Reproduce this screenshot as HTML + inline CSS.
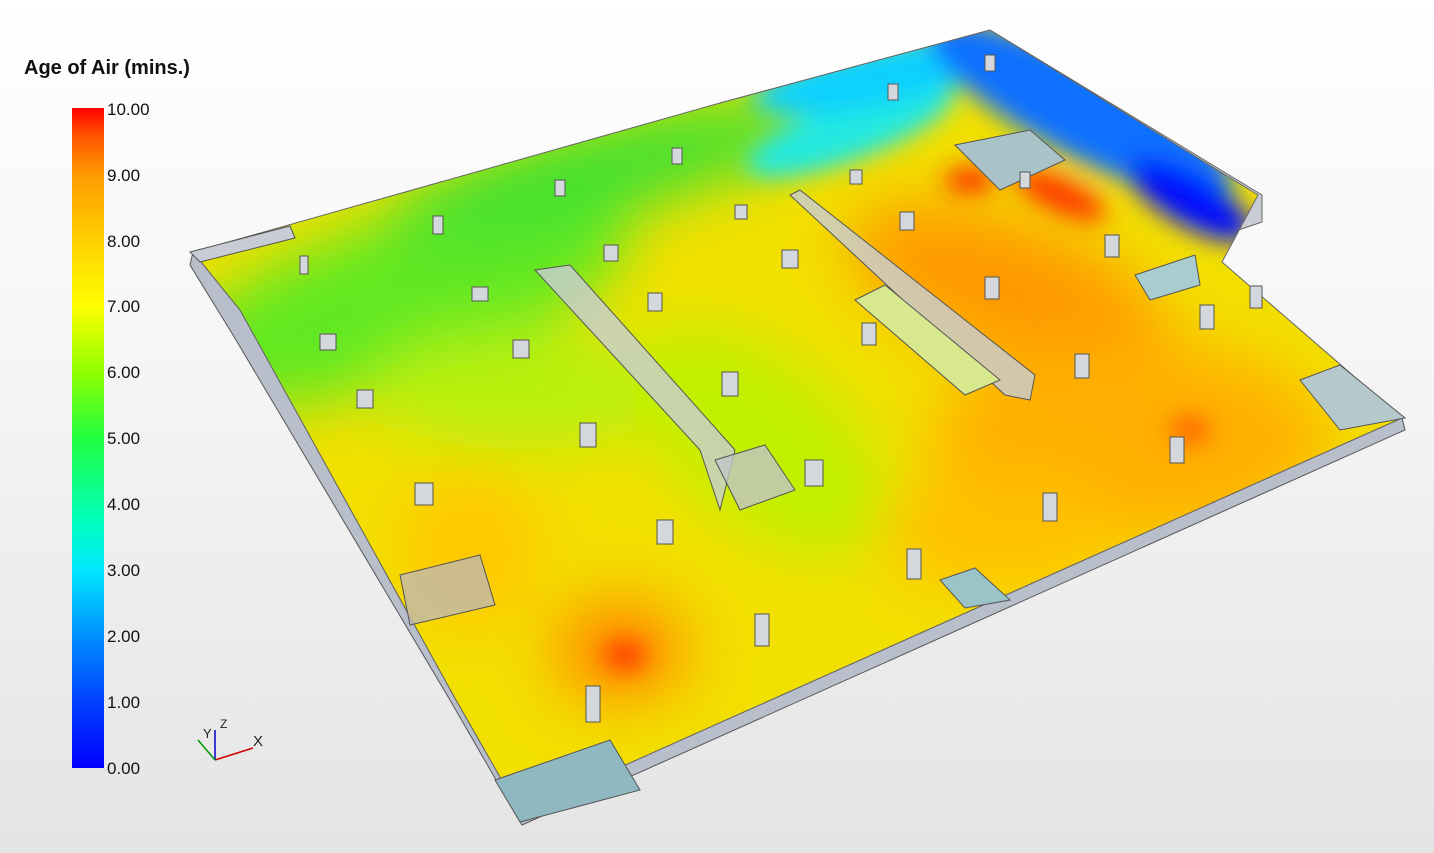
<!DOCTYPE html>
<html><head><style>
html,body{margin:0;padding:0;}
body{width:1434px;height:853px;overflow:hidden;background:linear-gradient(#ffffff,#f6f6f6 40%,#e4e4e4);font-family:"Liberation Sans",sans-serif;position:relative;}
.t{position:absolute;left:24px;top:57px;font-size:20px;font-weight:bold;color:#111;}
.bar{position:absolute;left:72px;top:108px;width:32px;height:660px;background:linear-gradient(to top,#0000ff 0%,#0040ff 10%,#0090ff 20%,#00e8ff 30%,#00ffc0 37%,#20ff40 50%,#90ff00 60%,#ffff00 70%,#ffd000 80%,#ff9a00 90%,#ff5000 96%,#ff0000 100%);}
.l{position:absolute;left:107px;font-size:17px;color:#111;}
</style></head><body>
<div class="t">Age of Air (mins.)</div>
<div class="bar"></div>
<div class="l" style="top:100px">10.00</div>
<div class="l" style="top:166px">9.00</div>
<div class="l" style="top:232px">8.00</div>
<div class="l" style="top:297px">7.00</div>
<div class="l" style="top:363px">6.00</div>
<div class="l" style="top:429px">5.00</div>
<div class="l" style="top:495px">4.00</div>
<div class="l" style="top:561px">3.00</div>
<div class="l" style="top:627px">2.00</div>
<div class="l" style="top:693px">1.00</div>
<div class="l" style="top:759px">0.00</div>
<svg width="1434" height="853" style="position:absolute;left:0;top:0">
<defs>
<clipPath id="fc"><polygon points="193,252 720,103 990,30 1258,195 1222,262 1402,418 520,812 456,700 240,310"/></clipPath>
<filter id="bl" x="-50%" y="-50%" width="200%" height="200%"><feGaussianBlur stdDeviation="30"/></filter>
<filter id="bl2" x="-50%" y="-50%" width="200%" height="200%"><feGaussianBlur stdDeviation="12"/></filter>
</defs>
<polygon points="193,252 240,310 456,700 520,812 1402,418 1405,430 522,825 450,700 233,335 190,265" fill="#b9bfca" stroke="#555" stroke-width="1"/>
<polygon points="720,103 990,30 1262,195 1262,222 1180,250 720,115" fill="#c9ccd4" stroke="#666" stroke-width="1"/>
<g clip-path="url(#fc)">
<rect x="150" y="0" width="1300" height="853" fill="#f2e000"/>
<g filter="url(#bl)">
<ellipse cx="400" cy="300" rx="240" ry="80" transform="rotate(-18 400 300)" fill="#60e820"/>
<ellipse cx="600" cy="170" rx="220" ry="45" transform="rotate(-14 600 170)" fill="#40e030"/>
<ellipse cx="520" cy="390" rx="150" ry="60" fill="#b8f010"/>
<ellipse cx="760" cy="440" rx="150" ry="80" transform="rotate(40 760 440)" fill="#c0f000"/>
<ellipse cx="1010" cy="290" rx="170" ry="70" transform="rotate(20 1010 290)" fill="#ff9a00"/>
<ellipse cx="1130" cy="440" rx="200" ry="100" fill="#ffb000"/>
<ellipse cx="1000" cy="530" rx="120" ry="60" fill="#ffc000"/>
<ellipse cx="620" cy="650" rx="70" ry="55" fill="#ff9500"/>
<ellipse cx="470" cy="550" rx="70" ry="80" fill="#ffc800"/>
</g>
<g filter="url(#bl2)">
<ellipse cx="850" cy="130" rx="110" ry="30" transform="rotate(-20 850 130)" fill="#20e8e0"/>
<ellipse cx="880" cy="75" rx="130" ry="30" transform="rotate(-12 880 75)" fill="#10d0ff"/>
<ellipse cx="1080" cy="110" rx="170" ry="45" transform="rotate(28 1080 110)" fill="#1070ff"/>
<ellipse cx="1190" cy="200" rx="70" ry="25" transform="rotate(30 1190 200)" fill="#0010ff"/>
<ellipse cx="1060" cy="195" rx="50" ry="16" transform="rotate(25 1060 195)" fill="#ff3000"/>
<ellipse cx="970" cy="180" rx="25" ry="12" fill="#ff2000"/>
<ellipse cx="625" cy="655" rx="22" ry="16" fill="#ff4000"/>
<ellipse cx="1190" cy="430" rx="20" ry="14" fill="#ff6000"/>
</g>
</g>
<polygon points="193,252 720,103 990,30 1258,195 1222,262 1402,418 520,812 456,700 240,310" fill="none" stroke="#666" stroke-width="1"/>
<polygon points="190,252 290,226 295,238 200,262" fill="#c8ccd4" stroke="#555"/>
<polygon points="535,270 570,265 735,450 720,510 700,450" fill="#c8cdd4" fill-opacity="0.8" stroke="#555"/>
<polygon points="790,195 800,190 1035,375 1030,400 1005,395" fill="#c8cdd4" fill-opacity="0.8" stroke="#555"/>
<polygon points="855,300 885,285 1000,380 965,395" fill="#d8e88c" stroke="#555"/>
<polygon points="955,145 1030,130 1065,160 1000,190" fill="#a9c3c8" stroke="#555"/>
<polygon points="715,460 765,445 795,490 740,510" fill="#c0c4c8" fill-opacity="0.8" stroke="#555"/>
<polygon points="400,575 480,555 495,605 410,625" fill="#c0b8b0" fill-opacity="0.8" stroke="#555"/>
<polygon points="940,580 975,568 1010,600 965,608" fill="#9bc4c8" stroke="#555"/>
<polygon points="1135,275 1195,255 1200,285 1150,300" fill="#a9cccf" stroke="#555"/>
<polygon points="1300,380 1340,365 1405,418 1340,430" fill="#b5c8cc" stroke="#555"/>
<polygon points="495,780 610,740 640,790 520,822" fill="#90b8c0" stroke="#555"/>
<g fill="#d4d8dc" stroke="#555" stroke-width="1">
<rect x="300" y="256" width="8" height="18"/><rect x="320" y="334" width="16" height="16"/><rect x="357" y="390" width="16" height="18"/>
<rect x="472" y="287" width="16" height="14"/><rect x="513" y="340" width="16" height="18"/><rect x="415" y="483" width="18" height="22"/>
<rect x="580" y="423" width="16" height="24"/><rect x="657" y="520" width="16" height="24"/><rect x="722" y="372" width="16" height="24"/>
<rect x="648" y="293" width="14" height="18"/><rect x="604" y="245" width="14" height="16"/><rect x="782" y="250" width="16" height="18"/>
<rect x="805" y="460" width="18" height="26"/><rect x="862" y="323" width="14" height="22"/><rect x="900" y="212" width="14" height="18"/>
<rect x="985" y="277" width="14" height="22"/><rect x="1075" y="354" width="14" height="24"/><rect x="1105" y="235" width="14" height="22"/>
<rect x="1200" y="305" width="14" height="24"/><rect x="1170" y="437" width="14" height="26"/><rect x="1043" y="493" width="14" height="28"/>
<rect x="907" y="549" width="14" height="30"/><rect x="755" y="614" width="14" height="32"/><rect x="586" y="686" width="14" height="36"/>
<rect x="672" y="148" width="10" height="16"/><rect x="555" y="180" width="10" height="16"/><rect x="433" y="216" width="10" height="18"/>
<rect x="735" y="205" width="12" height="14"/><rect x="850" y="170" width="12" height="14"/><rect x="888" y="84" width="10" height="16"/>
<rect x="985" y="55" width="10" height="16"/><rect x="1020" y="172" width="10" height="16"/><rect x="1250" y="286" width="12" height="22"/>
</g>
<g stroke-width="1.5">
<line x1="215" y1="760" x2="253" y2="748" stroke="#c00"/><line x1="215" y1="760" x2="215" y2="730" stroke="#00c"/><line x1="215" y1="760" x2="198" y2="740" stroke="#090"/>
</g>
<text x="203" y="738" font-size="13" font-family="Liberation Sans" fill="#222">Y</text>
<text x="220" y="728" font-size="12" font-family="Liberation Sans" fill="#222">Z</text>
<text x="253" y="746" font-size="15" font-family="Liberation Sans" fill="#222">X</text>
</svg>
</body></html>
